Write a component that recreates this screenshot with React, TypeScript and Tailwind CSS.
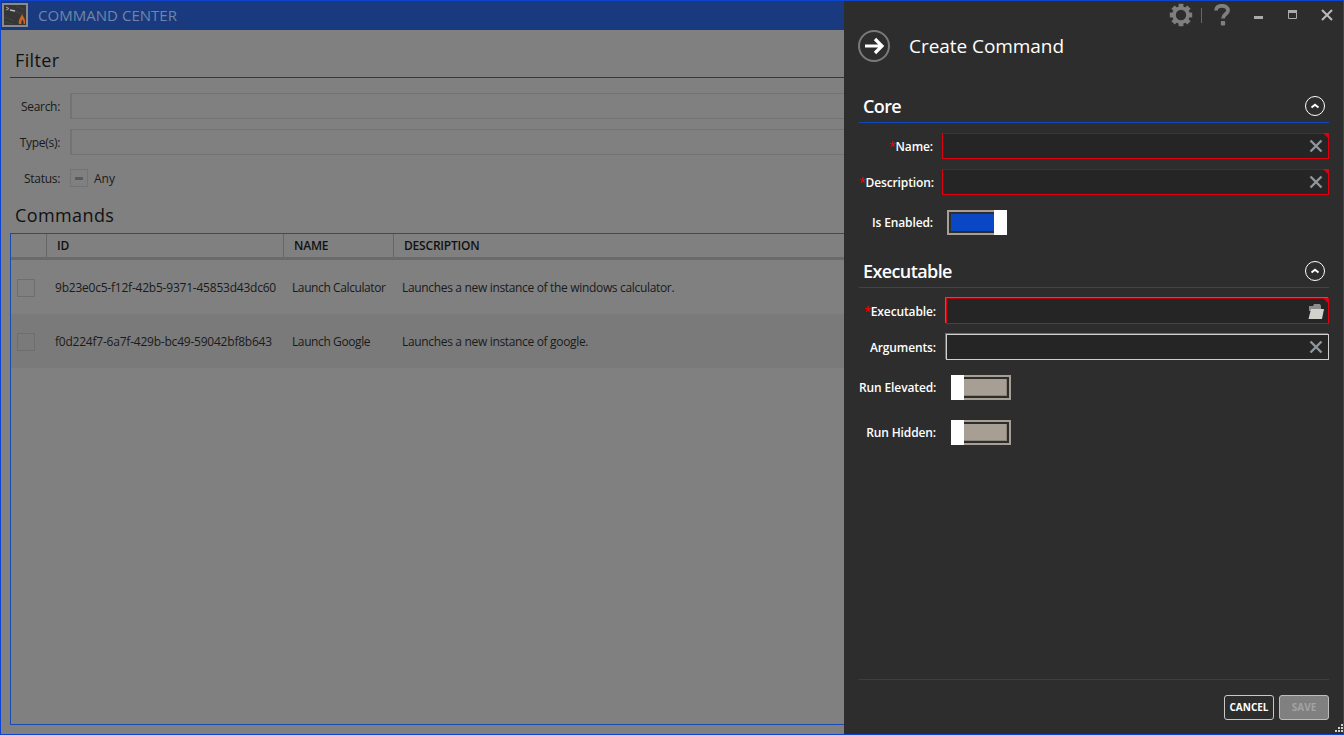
import React from "react";

function Logo() {
  return (
    <div className="w-[26px] h-[24px] border-2 border-[#8a8a8a] bg-[#2a2a2a] mt-[2px] ml-[1px] shrink-0">
      <svg viewBox="0 0 22 20" preserveAspectRatio="none" className="w-full h-full block">
        <rect width="22" height="20" fill="#363636" />
        <path d="M0 12 L10 16 M3 4 L20 9 M1 17 L9 19 M12 1 L21 5" stroke="#444444" strokeWidth="1" />
        <path d="M2 2 L5 3.5 L2 5" stroke="#a8a8a8" strokeWidth="1" fill="none" />
        <path d="M6 5 L11 6" stroke="#bdbdbd" strokeWidth="1.5" />
        <path d="M15 19 C14 15 16 14 18 9 C20 13 22 15 21 19 L19.6 19 C20 17 19 15.5 18.3 14.5 C17.5 16 17 17.5 17.4 19 Z" fill="#d0641e" />
      </svg>
    </div>
  );
}

function XIcon() {
  return (
    <svg width="14" height="14" viewBox="0 0 14 14" className="shrink-0">
      <path d="M1.5 1.5 L12.5 12.5 M12.5 1.5 L1.5 12.5" stroke="#8f979c" strokeWidth="2.4" />
    </svg>
  );
}

function FolderIcon() {
  return (
    <svg width="16" height="17" viewBox="0 0 16 17" className="shrink-0 -mr-[1px]">
      <path d="M1 3 H5 L6 1 H12 L13 3 V8 H1 Z" fill="#8c8c8c" />
      <path d="M3 6 H16 L14 16 H0.5 Z" fill="#d2d2cd" />
    </svg>
  );
}

function Gear() {
  const teeth = [0, 45, 90, 135, 180, 225, 270, 315];
  return (
    <svg width="24" height="24" viewBox="0 0 24 24" className="shrink-0">
      <circle cx="12" cy="12" r="7" fill="none" stroke="#7f7f7f" strokeWidth="3.6" />
      {teeth.map((a) => (
        <rect key={a} x="9.6" y="0.8" width="4.8" height="5" fill="#7f7f7f" transform={`rotate(${a} 12 12)`} />
      ))}
    </svg>
  );
}

function Section({ title }: { title: string }) {
  return (
    <div className="flex items-center justify-between h-[31px] border-b border-[#0f47bd] pl-1 pr-[4px] pb-[2px]">
      <span className="text-[18px] font-semibold text-white leading-none tracking-[-0.6px]">{title}</span>
      <span className="w-5 h-5 rounded-full border border-white flex items-center justify-center">
        <svg width="10" height="8" viewBox="0 0 10 8">
          <path d="M1.5 5.5 L5 2.8 L8.5 5.5" fill="none" stroke="#fff" strokeWidth="2" />
        </svg>
      </span>
    </div>
  );
}

function Field({
  label,
  required,
  invalid,
  inset,
  labelW,
  icon,
}: {
  label: string;
  required?: boolean;
  invalid?: boolean;
  inset?: boolean;
  labelW: string;
  icon: React.ReactNode;
}) {
  return (
    <div className="flex items-center h-[26px]">
      <div className={`${labelW} shrink-0 text-right text-[12px] font-semibold text-white tracking-[-0.12px] whitespace-nowrap mt-[2px]`}>
        {required && <span className="text-[#f00000]">*</span>}
        {label}
      </div>
      <div
        className={`relative flex-1 h-[26px] border bg-[#252525] flex items-center justify-end pr-[5px] ${
          invalid ? "border-[#e00010] border-t-[#b00010]" : "border-[#cfcfcf]"
        } ${inset ? "shadow-[-1px_-1px_0_#6f6f6f]" : ""}`}
      >
        {icon}
        {invalid && (
          <span className="absolute -top-px -right-px w-0 h-0 border-t-[6px] border-l-[6px] border-t-[#e00010] border-l-transparent" />
        )}
      </div>
    </div>
  );
}

function Toggle({ label, on, labelW }: { label: string; on?: boolean; labelW: string }) {
  return (
    <div className="flex items-center h-[25px]">
      <div className={`${labelW} shrink-0 text-right text-[12px] font-semibold text-white tracking-[-0.12px] whitespace-nowrap`}>
        {label}
      </div>
      {on ? (
        <div className="flex w-[60px] h-[25px]">
          <div className="flex-1 border-y-2 border-l-2 border-[#a79f94] p-[2px] pr-0 bg-[#2d2d2d]">
            <div className="h-full bg-[#0a47c4]" />
          </div>
          <div className="w-[13px] bg-white" />
        </div>
      ) : (
        <div className="flex w-[60px] h-[25px]">
          <div className="w-[13px] bg-white" />
          <div className="flex-1 border-y-2 border-r-2 border-[#a79f94] p-[2px] pl-0 bg-[#2d2d2d]">
            <div className="h-full bg-[#a79f94] border-r border-b border-[#8a847a]" />
          </div>
        </div>
      )}
    </div>
  );
}

const rows = [
  ["9b23e0c5-f12f-42b5-9371-45853d43dc60", "Launch Calculator", "Launches a new instance of the windows calculator."],
  ["f0d224f7-6a7f-429b-bc49-59042bf8b643", "Launch Google", "Launches a new instance of google."],
];

function FilterRow({ label, children }: { label: string; children: React.ReactNode }) {
  return (
    <div className="flex items-center">
      <div className="w-[59px] shrink-0 text-right text-[12px] text-[#1a1a1a] tracking-[-0.3px] mr-[10px] translate-y-[1px]">{label}</div>
      {children}
    </div>
  );
}

export default function App() {
  return (
    <div
      className="w-[1344px] h-[735px] flex overflow-hidden bg-[#808080] border-[#0e44d0] border-t border-b border-l border-r"
      style={{ fontFamily: '"Open Sans", "Noto Sans", sans-serif' }}
    >
      <div className="w-[843px] shrink-0 flex flex-col overflow-hidden">
        <div className="h-[29px] shrink-0 bg-[#1a3a80] flex items-start">
          <Logo />
          <span className="ml-[10px] mt-[4px] text-[15px] leading-[20px] text-[#6f86a8] tracking-[0.03px]">COMMAND CENTER</span>
        </div>
        <div className="pl-[9px] flex flex-col flex-1 min-h-0">
          <div className="h-[48px] border-b border-[#1a3a80] flex items-end pl-[5px] pb-[5px]">
            <span className="text-[18px] leading-[24px] text-[#111] tracking-[0.35px]">Filter</span>
          </div>
          <div className="flex flex-col gap-[10px] pt-[15px] -ml-[9px]">
            <FilterRow label="Search:">
              <div className="w-[900px] h-[26px] border-2 border-[#737373] border-r-0 border-b border-t" />
            </FilterRow>
            <FilterRow label="Type(s):">
              <div className="w-[900px] h-[26px] border-2 border-[#737373] border-r-0 border-b border-t" />
            </FilterRow>
            <div className="mt-[4px]">
              <FilterRow label="Status:">
                <div className="w-[18px] h-[18px] border border-[#737373] flex items-center justify-center">
                  <span className="w-[8px] h-[3px] bg-[#5a5a5a]" />
                </div>
                <span className="ml-[6px] text-[12px] text-[#1a1a1a] translate-y-[1px]">Any</span>
              </FilterRow>
            </div>
          </div>
          <div className="pl-[5px] mt-[16px] h-[26px] text-[18px] leading-[24px] text-[#111] tracking-[0.4px]">Commands</div>
          <div className="mt-[4px] mb-[9px] flex-1 min-h-0 w-[900px] border border-[#1a4bb0] border-r-0 flex flex-col text-[12px]">
            <div className="flex h-[26px] shrink-0 border-b-[3px] border-[#6a6a6a] font-semibold text-[12px] text-[#111] tracking-[-0.2px]">
              <div className="w-[36px] border-r border-[#666]" />
              <div className="w-[237px] border-r border-[#666] pl-[10px] flex items-center">ID</div>
              <div className="w-[110px] border-r border-[#666] pl-[10px] flex items-center">NAME</div>
              <div className="flex-1 pl-[10px] flex items-center">DESCRIPTION</div>
            </div>
            {rows.map((r, i) => (
              <div key={r[0]} className={`flex items-center h-[54px] pt-[2px] shrink-0 text-[#1a1a1a] ${i === 1 ? "bg-[#7a7a7a]" : ""}`}>
                <div className="w-[36px] pl-[6px]">
                  <div className="w-[18px] h-[18px] border border-[#6e6e6e]" />
                </div>
                <div className="w-[237px] pl-[8px] whitespace-nowrap tracking-[-0.22px]">{r[0]}</div>
                <div className="w-[110px] pl-[8px] whitespace-nowrap tracking-[-0.4px]">{r[1]}</div>
                <div className="pl-[8px] whitespace-nowrap tracking-[-0.33px]">{r[2]}</div>
              </div>
            ))}
          </div>
        </div>
      </div>

      <div className="relative flex-1 bg-[#2d2d2d] flex flex-col pl-[15px] pr-[14px]">
        <div className="flex items-center justify-end h-[28px] -mr-[14px] pr-[10px] shrink-0">
          <Gear />
          <span className="w-px h-[15px] bg-[#666] ml-[8px] mr-[12px]" />
          <svg width="16" height="22" viewBox="0 0 16 22" className="mr-[23px] shrink-0">
            <path d="M2 6.5 C2 3 4.6 1.8 8 1.8 C11.4 1.8 14 3.4 14 6.4 C14 10 9 10 9 14.5" fill="none" stroke="#7f7f7f" strokeWidth="3.8" />
            <rect x="6.8" y="17" width="4.4" height="4.6" rx="1" fill="#7f7f7f" />
          </svg>
          <svg width="12" height="12" viewBox="0 0 12 12" className="mr-[22px] mt-[5px] shrink-0"><rect x="1" y="4" width="9" height="3" fill="#aaa" /></svg>
          <svg width="12" height="12" viewBox="0 0 12 12" className="mr-[22px] shrink-0"><path d="M1.5 1.5 H9.5 V9.5 H1.5 Z" fill="none" stroke="#aaa" /><rect x="1" y="1" width="9" height="3" fill="#aaa" /></svg>
          <svg width="12" height="12" viewBox="0 0 12 12" className="shrink-0"><path d="M1 1 L11 11 M11 1 L1 11" stroke="#bbb" strokeWidth="2" /></svg>
        </div>
        <div className="flex items-center h-[34px] shrink-0">
          <span className="w-[32px] h-[32px] -ml-px rounded-full border-2 border-[#7a7a7a] flex items-center justify-center">
            <svg width="21" height="18" viewBox="0 0 21 18">
              <path d="M1 9 H18 M11 2 L18 9 L11 16" fill="none" stroke="#fff" strokeWidth="3.2" />
            </svg>
          </span>
          <span className="ml-[19px] text-[19px] text-white tracking-[-0.05px]">Create Command</span>
        </div>
        <div className="mt-[29px]"><Section title="Core" /></div>
        <div className="flex flex-col gap-[10px] mt-[10px]">
          <Field label="Name:" required invalid labelW="w-[74px] mr-[9px]" icon={<XIcon />} />
          <Field label="Description:" required invalid labelW="w-[74px] mr-[9px]" icon={<XIcon />} />
        </div>
        <div className="mt-[15px]"><Toggle label="Is Enabled:" on labelW="w-[74px] mr-[14px]" /></div>
        <div className="mt-[22px]"><Section title="Executable" /></div>
        <div className="flex flex-col gap-[10px] mt-[10px]">
          <Field label="Executable:" required invalid inset labelW="w-[77px] mr-[10px]" icon={<FolderIcon />} />
          <Field label="Arguments:" inset labelW="w-[77px] mr-[10px]" icon={<XIcon />} />
        </div>
        <div className="flex flex-col gap-[20px] mt-[15px]">
          <Toggle label="Run Elevated:" labelW="w-[77px] mr-[15px]" />
          <Toggle label="Run Hidden:" labelW="w-[77px] mr-[15px]" />
        </div>
        <div className="mt-auto border-t border-[#1c3f8f] pt-[15px] pb-[14px] flex justify-end gap-[5px]">
          <button className="w-[50px] h-[25px] rounded-[3px] border border-[#c8c8c8] bg-[#2d2d2d] text-white text-[10px] font-bold">CANCEL</button>
          <button className="w-[50px] h-[25px] rounded-[3px] border border-[#bdbdbd] bg-[#808080] text-[#a3a3a3] text-[10px] font-bold">SAVE</button>
        </div>
        <svg width="10" height="10" viewBox="0 0 10 10" className="absolute right-0 bottom-0">
          <g fill="#d0d0d0">
            <rect x="8" y="0" width="2" height="2" /><rect x="5" y="3" width="2" height="2" /><rect x="8" y="3" width="2" height="2" />
            <rect x="2" y="6" width="2" height="2" /><rect x="5" y="6" width="2" height="2" /><rect x="8" y="6" width="2" height="2" />
          </g>
        </svg>
      </div>
    </div>
  );
}
